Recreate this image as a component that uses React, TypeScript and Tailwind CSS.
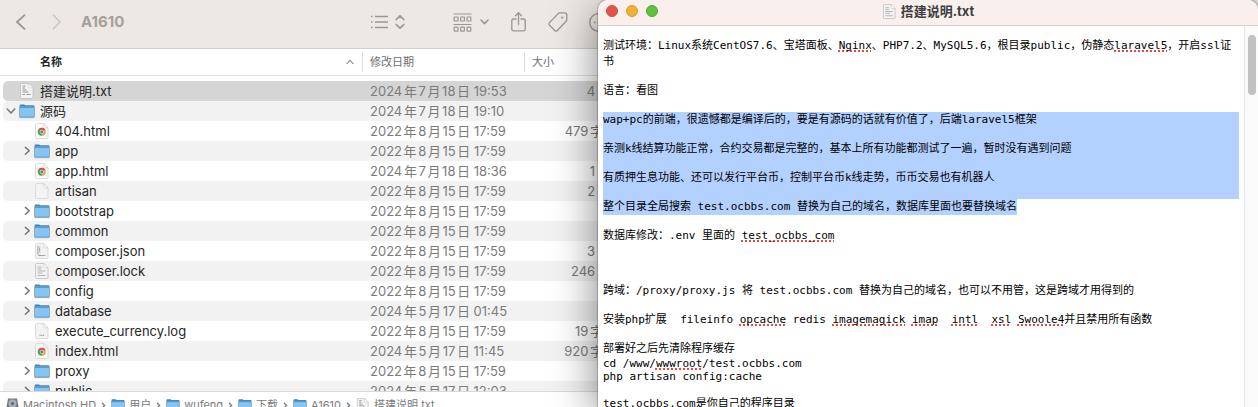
import { Fragment } from 'react';
import type { ReactNode } from 'react';

type IconKind = 'folder' | 'chrome' | 'text' | 'blank' | 'json' | 'lock' | 'log';

interface FileRow {
  name: string;
  kind: IconKind;
  date: string;
  size: string;
  level: number;
  open?: boolean;
}

const files: FileRow[] = [
  { name: '搭建说明.txt', kind: 'text', date: '2024年7月18日 19:53', size: '4 KB', level: 0 },
  { name: '源码', kind: 'folder', date: '2024年7月18日 19:10', size: '', level: 0, open: true },
  { name: '404.html', kind: 'chrome', date: '2022年8月15日 17:59', size: '479字节', level: 1 },
  { name: 'app', kind: 'folder', date: '2022年8月15日 17:59', size: '', level: 1 },
  { name: 'app.html', kind: 'chrome', date: '2024年7月18日 18:36', size: '1 KB', level: 1 },
  { name: 'artisan', kind: 'blank', date: '2022年8月15日 17:59', size: '2 KB', level: 1 },
  { name: 'bootstrap', kind: 'folder', date: '2022年8月15日 17:59', size: '', level: 1 },
  { name: 'common', kind: 'folder', date: '2022年8月15日 17:59', size: '', level: 1 },
  { name: 'composer.json', kind: 'json', date: '2022年8月15日 17:59', size: '3 KB', level: 1 },
  { name: 'composer.lock', kind: 'lock', date: '2022年8月15日 17:59', size: '246 KB', level: 1 },
  { name: 'config', kind: 'folder', date: '2022年8月15日 17:59', size: '', level: 1 },
  { name: 'database', kind: 'folder', date: '2024年5月17日 01:45', size: '', level: 1 },
  { name: 'execute_currency.log', kind: 'log', date: '2022年8月15日 17:59', size: '19字节', level: 1 },
  { name: 'index.html', kind: 'chrome', date: '2024年5月17日 11:45', size: '920字节', level: 1 },
  { name: 'proxy', kind: 'folder', date: '2022年8月15日 17:59', size: '', level: 1 },
  { name: 'public', kind: 'folder', date: '2024年5月17日 12:03', size: '', level: 1 },
];

const pathItems: { name: string; kind: 'disk' | 'folder' | 'text' }[] = [
  { name: 'Macintosh HD', kind: 'disk' },
  { name: '用户', kind: 'folder' },
  { name: 'wufeng', kind: 'folder' },
  { name: '下载', kind: 'folder' },
  { name: 'A1610', kind: 'folder' },
  { name: '搭建说明.txt', kind: 'text' },
];

function FolderIcon({ className = 'h-4 w-4' }: { className?: string }) {
  return (
    <svg viewBox="0 0 16 16" className={className} aria-hidden="true">
      <path d="M.6 2.4c0-.7.4-1 1-1h3.500c.6 0 .8.9 1.500.9h7.800c.6 0 1 .4 1 1V5H.6z" fill="#3f86bd" />
      <rect x=".5" y="3.8" width="15" height="10.9" rx="1" fill="#85c5f3" stroke="#8b9aa5" strokeWidth=".8" />
      <path d="M1 4.3h14" stroke="#4a95d0" strokeWidth="1" />
      <path d="M1 13.4h14" stroke="#6fb2e4" strokeWidth="1" />
    </svg>
  );
}

function DocIcon({ kind, className = 'h-4 w-4' }: { kind: IconKind; className?: string }) {
  return (
    <svg viewBox="0 0 16 16" className={className} fill="none" aria-hidden="true">
      <path
        d="M2.5.5h7.2L14 4.8v9.7c0 .6-.4 1-1 1H2.5c-.6 0-1-.4-1-1v-13c0-.6.4-1 1-1z"
        fill={kind === 'chrome' ? '#fafafa' : '#f3f3f3'}
        stroke={kind === 'text' || kind === 'lock' ? '#bdbdbd' : '#d3d3d3'}
        strokeWidth=".8"
      />
      <path d="M9.7.5v3.3c0 .6.4 1 1 1H14z" fill="#fff" stroke="#c4c4c4" strokeWidth=".6" />
      {kind === 'text' && (
        <path d="M3.5 3h3M3.5 5h2.5M3.5 7h4M3.5 9h6M3.5 11.5h2.5M7.5 11.5h4" stroke="#8d8d8d" strokeWidth=".9" />
      )}
      {kind === 'lock' && (
        <path d="M3.5 4h4M3.5 6h4M3.5 8h8M3.5 10h5M3.5 12.5h8" stroke="#a4a4a4" strokeWidth=".8" />
      )}
      {kind === 'json' && (
        <>
          <path d="M3.5 2.5h3v9h-3z" fill="#dedede" />
          <path d="M3.8 3v9M5.5 4.500v4M4 12.500h2.500" stroke="#b0b0b0" strokeWidth="1" />
          <path d="M5.5 12.500h6" stroke="#8a8a8a" strokeWidth="1.2" strokeDasharray="1.4 .5" />
        </>
      )}
      {kind === 'log' && <path d="M5.5 12.3h5" stroke="#909090" strokeWidth="1" strokeDasharray="1.2 .5" />}
      {kind === 'chrome' && (
        <>
          <circle cx="7.8" cy="8.8" r="4" fill="#e5a93a" />
          <path d="M7.8 8.8 4.3 6.8A4 4 0 0 1 11.3 6.8z" fill="#d94b3d" />
          <path d="M7.8 8.8 4.3 6.8A4 4 0 0 0 7.8 12.8z" fill="#3fa757" />
          <circle cx="7.8" cy="8.8" r="2" fill="#fff" />
          <circle cx="7.8" cy="8.8" r="1.5" fill="#3f7de0" />
        </>
      )}
    </svg>
  );
}

function DiskIcon() {
  return (
    <svg viewBox="0 0 13 14" className="h-3.5 w-[13px]" aria-hidden="true">
      <path d="M2 .5h9l1.5 8v4c0 .6-.4 1-1 1h-10c-.6 0-1-.4-1-1v-4z" fill="#747b82" />
      <circle cx="6.5" cy="5.5" r="4" fill="#a8aeb4" />
      <circle cx="6.5" cy="5.5" r="1.5" fill="#5b6268" />
      <path d="M.8 10h11.4v3H.8z" fill="#565c62" />
    </svg>
  );
}

function Disclosure({ open }: { open?: boolean }) {
  return (
    <button type="button" aria-label={open ? '折叠' : '展开'} className="flex w-4 shrink-0 justify-center text-[#757575]">
      <svg viewBox="0 0 10 10" className="h-2.5 w-2.5" fill="none" stroke="currentColor" strokeWidth="1.5" strokeLinecap="round" strokeLinejoin="round">
        {open ? <path d="M1.2 3 5 7l3.8-4" /> : <path d="m4.4 1.4 3.8 3.4-3.8 3.4" />}
      </svg>
    </button>
  );
}

function Toolbar() {
  return (
    <header className="flex h-[49px] shrink-0 items-center border-b border-[#d3cfcb] bg-[#ede8e3] pb-1 text-[#9b9691]">
      <div className="flex w-[370px] shrink-0 items-center pl-[15px]">
        <button type="button" aria-label="后退">
          <svg width="12" height="16" viewBox="0 0 12 16" fill="none" stroke="currentColor" strokeWidth="1.8" strokeLinecap="round" strokeLinejoin="round">
            <path d="M9.5 1.2 2 8l7.5 6.8" />
          </svg>
        </button>
        <button type="button" aria-label="前进" className="ml-6 text-[#cbc6c2]">
          <svg width="12" height="16" viewBox="0 0 12 16" fill="none" stroke="currentColor" strokeWidth="1.6" strokeLinecap="round" strokeLinejoin="round">
            <path d="m2.5 1.2 6.5 6.8-6.5 6.8" />
          </svg>
        </button>
        <h1 className="ml-[18px] text-[15px] font-bold text-[#a5a09c]">A1610</h1>
      </div>
      <button type="button" aria-label="列表显示" className="flex shrink-0 items-center gap-[7px]">
        <svg width="18" height="14" viewBox="0 0 18 14" fill="none" stroke="currentColor" strokeWidth="1.3">
          <path d="M5 1.5h13M5 7h13M5 12.5h13" />
          <path d="M1 1.5h1.6M1 7h1.6M1 12.5h1.6" strokeWidth="1.7" />
        </svg>
        <svg width="10" height="16" viewBox="0 0 10 16" fill="none" stroke="currentColor" strokeWidth="1.7" strokeLinecap="round" strokeLinejoin="round">
          <path d="M1.2 5.5 5 1.8l3.8 3.7M1.2 10.5 5 14.2l3.8-3.7" />
        </svg>
      </button>
      <button type="button" aria-label="分组" className="ml-12 flex shrink-0 items-center gap-2">
        <svg width="19" height="19" viewBox="0 0 19 19" fill="none" stroke="currentColor" strokeWidth="1.2">
          <path d="M.5 1h18M.5 11.5h18" />
          <rect x="1.2" y="4" width="3.8" height="4" rx=".6" />
          <rect x="7.6" y="4" width="3.8" height="4" rx=".6" />
          <rect x="14" y="4" width="3.8" height="4" rx=".6" />
          <rect x="1.2" y="14.2" width="3.8" height="4" rx=".6" />
          <rect x="7.6" y="14.2" width="3.8" height="4" rx=".6" />
          <rect x="14" y="14.2" width="3.8" height="4" rx=".6" />
        </svg>
        <svg width="9" height="6" viewBox="0 0 9 6" fill="none" stroke="currentColor" strokeWidth="1.6" strokeLinecap="round" strokeLinejoin="round">
          <path d="m1 1 3.500 3.600L8 1" />
        </svg>
      </button>
      <button type="button" aria-label="共享" className="ml-[22px] shrink-0">
        <svg width="15" height="20" viewBox="0 0 15 20" fill="none" stroke="currentColor" strokeWidth="1.3" strokeLinecap="round" strokeLinejoin="round">
          <path d="M5 7H2.4C1.4 7 .8 7.6.8 8.5v8.8c0 1 .6 1.6 1.6 1.6h10.2c1 0 1.6-.6 1.6-1.6V8.500c0-.9-.6-1.5-1.6-1.5H10" />
          <path d="M7.5 12.5V1M4.5 3.8l3-3 3 3" />
        </svg>
      </button>
      <button type="button" aria-label="标签" className="ml-[22px] shrink-0">
        <svg width="20" height="20" viewBox="0 0 20 20" fill="none" stroke="currentColor" strokeWidth="1.3" strokeLinejoin="round">
          <path d="M11.8.9h4.800c1.3 0 2.2.9 2.2 2.2v4.5c0 .7-.2 1.2-.7 1.7l-8.7 9.2c-.8.8-1.8.8-2.6 0l-5.300-5.300c-.8-.8-.8-1.800 0-2.600l8.700-9c.5-.5 1-.7 1.6-.7z" />
          <circle cx="14.200" cy="5.600" r="1.100" fill="currentColor" stroke="none" />
        </svg>
      </button>
      <button type="button" aria-label="更多" className="ml-[21px] shrink-0">
        <svg width="19" height="19" viewBox="0 0 19 19" fill="none" stroke="currentColor" strokeWidth="1.3">
          <circle cx="9.5" cy="9.5" r="8.8" />
          <path d="M5 9.5h1.6M8.700 9.5h1.6M12.4 9.5H14" strokeWidth="1.6" />
        </svg>
      </button>
    </header>
  );
}

function Finder() {
  return (
    <section className="flex h-full w-[640px] flex-col overflow-hidden bg-white font-[Inter,'Noto_Sans_CJK_SC',sans-serif]">
      <Toolbar />
      <div className="min-h-0 flex-1 overflow-hidden">
        <table className="w-[623px] table-fixed border-separate border-spacing-0 text-[13px] leading-5">
          <colgroup>
            <col className="w-[362px]" />
            <col className="w-[162px]" />
            <col className="w-[99px]" />
          </colgroup>
          <thead>
            <tr className="h-[27px] text-left text-[11px] text-[#6e6e6e]">
              <th className="border-b border-[#e2e2e2] p-0 font-semibold text-[#262626]">
                <div className="flex items-center justify-between pr-2 pl-10">
                  名称
                  <svg width="8" height="6" viewBox="0 0 8 6" fill="none" stroke="#808080" strokeWidth="1.1" aria-hidden="true">
                    <path d="M.6 5 4 1.2 7.4 5" />
                  </svg>
                </div>
              </th>
              <th className="border-b border-[#e2e2e2] p-0 font-normal">
                <div className="h-5 border-l border-[#dcdcdc] pl-[7px]">修改日期</div>
              </th>
              <th className="border-b border-[#e2e2e2] p-0 font-normal">
                <div className="h-5 border-l border-[#dcdcdc] pl-[7px]">大小</div>
              </th>
            </tr>
          </thead>
          <tbody>
            <tr aria-hidden="true" className="h-[5px]">
              <td colSpan={3} className="p-0 leading-none"></td>
            </tr>
            {files.map((file, i) => {
              const bg = i === 0 ? 'bg-[#d5d5d5]' : i % 2 === 1 ? 'bg-[#f2f2f2]' : '';
              return (
                <tr key={file.name} className="h-5">
                  <td className="p-0 pl-[3px]">
                    <div className={`flex h-5 items-center rounded-l-[5px] text-[#262626] ${bg} ${file.level === 1 ? 'pl-[15px]' : ''}`}>
                      {file.kind === 'folder' ? <Disclosure open={file.open} /> : <span className="w-4 shrink-0" />}
                      {file.kind === 'folder' ? <FolderIcon /> : <DocIcon kind={file.kind} />}
                      <span className="ml-[5px]">{file.name}</span>
                    </div>
                  </td>
                  <td className={`p-0 pl-2 whitespace-nowrap text-[#7b7b7b] [text-autospace:normal] ${bg}`}>{file.date}</td>
                  <td className={`p-0 pr-[7px] text-right whitespace-nowrap text-[#7b7b7b] [text-autospace:normal] ${bg}`}>{file.size}</td>
                </tr>
              );
            })}
          </tbody>
        </table>
      </div>
      <nav aria-label="路径" className="h-4 shrink-0 overflow-hidden border-t border-[#d9d9d9] bg-white">
        <ol className="flex h-[26px] items-center gap-[5px] pl-[6px] text-[11px] text-[#7c7c7c]">
          {pathItems.map((item, i) => (
            <Fragment key={item.name}>
              {i > 0 && (
                <li aria-hidden="true">
                  <svg width="5" height="7" viewBox="0 0 5 7" fill="none" stroke="#7c7c7c" strokeWidth="1.3">
                    <path d="m1 .8 2.6 2.7L1 6.2" />
                  </svg>
                </li>
              )}
              <li className="flex items-center gap-1">
                {item.kind === 'disk' && <DiskIcon />}
                {item.kind === 'folder' && <FolderIcon className="h-3.5 w-3.5" />}
                {item.kind === 'text' && <DocIcon kind="text" className="h-3.5 w-3.5" />}
                {item.name}
              </li>
            </Fragment>
          ))}
        </ol>
      </nav>
    </section>
  );
}

// A word flagged by the spell checker
function Sp({ children }: { children: ReactNode }) {
  return (
    <span className="underline decoration-[#e8493f] decoration-dotted decoration-2 underline-offset-1 [text-decoration-skip-ink:none]">
      {children}
    </span>
  );
}

interface NoteLine {
  text?: ReactNode;
  latin?: boolean;
  selected?: 'full' | 'text';
}

const note: NoteLine[] = [
  {
    text: (
      <>
        测试环境：Linux系统CentOS7.6、宝塔面板、<Sp>Nginx</Sp>、PHP7.2、MySQL5.6，根目录public，伪静态<Sp>laravel5</Sp>，开启ssl证书
      </>
    ),
  },
  {},
  { text: '语言：看图' },
  {},
  { text: 'wap+pc的前端，很遗憾都是编译后的，要是有源码的话就有价值了，后端laravel5框架', selected: 'full' },
  { selected: 'full' },
  { text: '亲测k线结算功能正常，合约交易都是完整的，基本上所有功能都测试了一遍，暂时没有遇到问题', selected: 'full' },
  { selected: 'full' },
  { text: '有质押生息功能、还可以发行平台币，控制平台币k线走势，币币交易也有机器人', selected: 'full' },
  { selected: 'full' },
  { text: '整个目录全局搜索 test.ocbbs.com 替换为自己的域名，数据库里面也要替换域名', selected: 'text' },
  {},
  {
    text: (
      <>
        数据库修改：.env 里面的 <Sp>test_ocbbs_com</Sp>
      </>
    ),
  },
  {},
  {},
  {},
  { text: '跨域：/proxy/proxy.js 将 test.ocbbs.com 替换为自己的域名，也可以不用管，这是跨域才用得到的' },
  {},
  {
    text: (
      <>
        安装php扩展{'  '}fileinfo <Sp>opcache</Sp> redis <Sp>imagemagick</Sp> <Sp>imap</Sp>
        {'  '}
        <Sp>intl</Sp>
        {'  '}
        <Sp>xsl</Sp> <Sp>Swoole4</Sp>并且禁用所有函数
      </>
    ),
  },
  {},
  { text: '部署好之后先清除程序缓存' },
  {
    text: (
      <>
        cd /www/<Sp>wwwroot</Sp>/test.ocbbs.com
      </>
    ),
    latin: true,
  },
  { text: 'php artisan config:cache', latin: true },
  {},
  { text: 'test.ocbbs.com是你自己的程序目录' },
];

function Editor() {
  return (
    <section className="absolute inset-y-0 right-0 left-[598px] flex flex-col overflow-hidden rounded-t-[10px] bg-white shadow-[0_10px_45px_rgba(0,0,0,0.5),0_0_1px_1px_rgba(0,0,0,0.2)]">
      <header className="grid h-[26px] shrink-0 grid-cols-[1fr_auto_1fr] items-center border-b border-[#d6cecc] bg-[#f9f0ed] px-2 pb-[3px]">
        <div className="flex gap-2">
          <button type="button" aria-label="关闭" className="h-3 w-3 rounded-full border border-[#cf4a41] bg-[#e4544b]" />
          <button type="button" aria-label="最小化" className="h-3 w-3 rounded-full border border-[#d69a2c] bg-[#ecb135]" />
          <button type="button" aria-label="缩放" className="h-3 w-3 rounded-full border border-[#51a536] bg-[#62c03f]" />
        </div>
        <div className="flex items-center gap-1 font-[Inter,'Noto_Sans_CJK_SC',sans-serif]">
          <DocIcon kind="lock" className="h-[15px] w-[15px]" />
          <h2 className="text-[13px] leading-5 font-bold text-[#404040]">搭建说明.txt</h2>
        </div>
      </header>
      <div className="flex min-h-0 flex-1">
        <div className="min-w-0 flex-1 overflow-hidden px-[5px] pt-3 font-['DejaVu_Sans_Mono','Noto_Sans_CJK_SC',monospace] text-[11px] whitespace-pre-wrap text-black [text-autospace:no-autospace] [text-spacing-trim:space-all]">
          {note.map((line, i) => (
            <p
              key={i}
              className={`${line.text && !line.latin ? 'min-h-4 leading-4' : 'min-h-[13px] leading-[13px]'} ${line.selected === 'full' ? 'bg-[#b3d1ff]' : ''}`}
            >
              {line.selected === 'text' ? <span className="inline-block bg-[#b3d1ff]">{line.text}</span> : line.text}
            </p>
          ))}
        </div>
        <div className="w-[14px] shrink-0 border-l border-[#e6e6e6] bg-[#fafafa] pt-[9px] pl-[3px]">
          <div className="h-[60px] w-2 rounded-full bg-[#c1c1c1]" />
        </div>
      </div>
    </section>
  );
}

export default function App() {
  return (
    <main className="relative h-screen overflow-hidden bg-[#ede8e3]">
      <Finder />
      <Editor />
    </main>
  );
}
